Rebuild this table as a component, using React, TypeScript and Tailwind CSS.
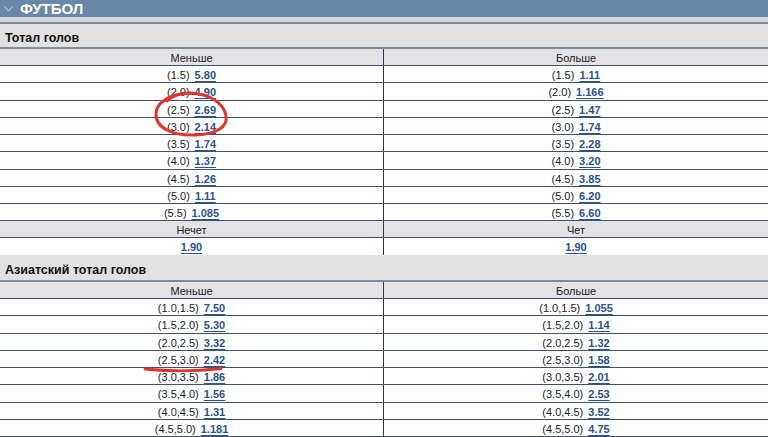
const font = { fontFamily: '"Liberation Sans", Arial, Helvetica, sans-serif' };

type Pair = [string, string];

const totals: { under: Pair; over: Pair }[] = [
  { under: ["(1.5)", "5.80"], over: ["(1.5)", "1.11"] },
  { under: ["(2.0)", "4.90"], over: ["(2.0)", "1.166"] },
  { under: ["(2.5)", "2.69"], over: ["(2.5)", "1.47"] },
  { under: ["(3.0)", "2.14"], over: ["(3.0)", "1.74"] },
  { under: ["(3.5)", "1.74"], over: ["(3.5)", "2.28"] },
  { under: ["(4.0)", "1.37"], over: ["(4.0)", "3.20"] },
  { under: ["(4.5)", "1.26"], over: ["(4.5)", "3.85"] },
  { under: ["(5.0)", "1.11"], over: ["(5.0)", "6.20"] },
  { under: ["(5.5)", "1.085"], over: ["(5.5)", "6.60"] },
];

const asian: { under: Pair; over: Pair }[] = [
  { under: ["(1.0,1.5)", "7.50"], over: ["(1.0,1.5)", "1.055"] },
  { under: ["(1.5,2.0)", "5.30"], over: ["(1.5,2.0)", "1.14"] },
  { under: ["(2.0,2.5)", "3.32"], over: ["(2.0,2.5)", "1.32"] },
  { under: ["(2.5,3.0)", "2.42"], over: ["(2.5,3.0)", "1.58"] },
  { under: ["(3.0,3.5)", "1.86"], over: ["(3.0,3.5)", "2.01"] },
  { under: ["(3.5,4.0)", "1.56"], over: ["(3.5,4.0)", "2.53"] },
  { under: ["(4.0,4.5)", "1.31"], over: ["(4.0,4.5)", "3.52"] },
  { under: ["(4.5,5.0)", "1.181"], over: ["(4.5,5.0)", "4.75"] },
];

function Odd({ value, gap = true }: { value: string; gap?: boolean }) {
  return (
    <a
      href="#"
      className={`${gap ? "ml-[5px]" : ""} font-bold text-[#29538a] underline decoration-1 underline-offset-[2px]`}
    >
      {value}
    </a>
  );
}

function Cell({ pair, left }: { pair: Pair; left?: boolean }) {
  return (
    <div
      className={`flex items-center justify-center pt-[2px] ${left ? "border-r border-[#22375a]" : ""}`}
    >
      <span className="text-[#222]">{pair[0]}</span>
      <Odd value={pair[1]} />
    </div>
  );
}

function HeadRow({ left, right }: { left: string; right: string }) {
  return (
    <div className="grid h-[17px] grid-cols-2 border-b border-[#3b5275] bg-[#e3e3e5] text-[11px] leading-none text-[#222]">
      <div className="flex items-center justify-center border-r border-[#22375a] pt-[3px]">{left}</div>
      <div className="flex items-center justify-center pt-[3px]">{right}</div>
    </div>
  );
}

function OddsRow({ under, over, tall }: { under: Pair; over: Pair; tall?: boolean }) {
  return (
    <div
      className={`grid ${tall ? "h-[18px]" : "h-[17px]"} grid-cols-2 border-b border-[#3b5275] bg-white text-[11px] leading-none`}
    >
      <Cell pair={under} left />
      <Cell pair={over} />
    </div>
  );
}

function SectionTitle({ title, tall }: { title: string; tall?: boolean }) {
  return (
    <div
      className={`flex ${tall ? "h-[27px]" : "h-[25px]"} items-center border-b-2 border-[#7a8aa0] bg-[#e1e1e1] pl-[5px] pt-[6px] text-[12.5px] font-bold text-[#111]`}
    >
      {title}
    </div>
  );
}

export default function App() {
  return (
    <div className="relative h-[437px] w-[768px] overflow-hidden bg-white" style={font}>
      {/* Sport header */}
      <div className="flex h-[17px] items-center bg-[#6987a6] pl-[4px] text-[15px] font-bold leading-none text-white">
        <svg width="9" height="6" viewBox="0 0 9 6" className="mr-[7px]">
          <polyline points="0.5,0.5 4.5,5 8.5,0.5" fill="none" stroke="#d5dfea" strokeWidth="1" />
        </svg>
        ФУТБОЛ
      </div>
      <div className="h-[5px] bg-[#d7d7d7]" />
      <div className="h-[2px] bg-[#6f89a6]" />

      {/* Тотал голов */}
      <SectionTitle title="Тотал голов" />
      <HeadRow left="Меньше" right="Больше" />
      {totals.map((r, i) => (
        <OddsRow key={i} under={r.under} over={r.over} tall={i % 4 === 1} />
      ))}
      <HeadRow left="Нечет" right="Чет" />
      <div className="grid h-[17px] grid-cols-2 bg-white text-[11px] leading-none">
        <div className="flex items-center justify-center border-r border-[#22375a] pt-[2px]">
          <Odd value="1.90" gap={false} />
        </div>
        <div className="flex items-center justify-center pt-[2px]">
          <Odd value="1.90" gap={false} />
        </div>
      </div>

      {/* Азиатский тотал голов */}
      <SectionTitle title="Азиатский тотал голов" tall />
      <HeadRow left="Меньше" right="Больше" />
      {asian.map((r, i) => (
        <OddsRow key={i} under={r.under} over={r.over} tall={i % 4 === 1} />
      ))}

      {/* Hand-drawn annotations */}
      <svg className="pointer-events-none absolute left-0 top-0" width="768" height="437">
        <path
          d="M 204 95 C 178 89, 157 100, 156 113 C 155 128, 173 136, 196 135 C 216 134, 228 127, 226 116 C 224 103, 210 94, 190 93 C 180 93, 172 96, 167 101"
          fill="none"
          stroke="#e3342b"
          strokeWidth="3"
          strokeLinecap="round"
        />
        <path
          d="M 145 369 C 170 371.5, 200 371, 221 368.5"
          fill="none"
          stroke="#e3342b"
          strokeWidth="2.8"
          strokeLinecap="round"
        />
      </svg>
    </div>
  );
}
